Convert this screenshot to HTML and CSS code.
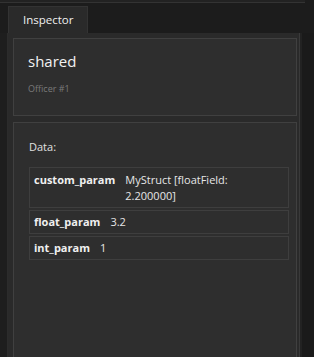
FILE: index.html
```html
<!DOCTYPE html>
<html>
<head>
<meta charset="utf-8">
<link rel="stylesheet" href="styles.css">
</head>
<body>
<div class="top-strip"></div>
<div class="tab-bar">
  <div class="tab">Inspector</div>
</div>
<div class="main">
  <div class="gutter-left"></div>
  <div class="panel">
    <div class="card header-card">
      <div class="title">shared</div>
      <div class="subtitle">Officer #1</div>
    </div>
    <div class="card data-card">
      <div class="data-label">Data:</div>
      <div class="rows">
        <div class="row"><span class="key">custom_param</span><span class="val">MyStruct [floatField: 2.200000]</span></div>
        <div class="row"><span class="key">float_param</span><span class="val">3.2</span></div>
        <div class="row"><span class="key">int_param</span><span class="val">1</span></div>
      </div>
    </div>
  </div>
  <div class="gutter-right"></div>
</div>
</body>
</html>
```
FILE: styles.css
```css
html, body {
  margin: 0;
  padding: 0;
  height: 100%;
  overflow: hidden;
}
body {
  background: #1c1c1c;
  font-family: "Open Sans", "Noto Sans", sans-serif;
  color: #e6e6e6;
  display: flex;
  flex-direction: column;
}
.top-strip {
  height: 2px;
  margin-right: 9px;
  border-bottom: 1px solid #333333;
  background: #222222;
}
.tab-bar {
  height: 30px;
  display: flex;
  align-items: flex-end;
  padding-left: 8px;
  background: #1c1c1c;
}
.tab {
  width: 80px;
  height: 27px;
  box-sizing: border-box;
  background: #2a2a2a;
  border: 1px solid #333333;
  border-bottom: none;
  font-size: 11.5px;
  line-height: 26px;
  padding-left: 14px;
  color: #f0f0f0;
}
.main {
  flex: 1;
  display: flex;
  min-height: 0;
}
.gutter-left {
  width: 8px;
  background: #1e1e1e;
  border-right: 1px solid #2c2c2c;
  box-sizing: border-box;
}
.panel {
  flex: 1;
  background: #2a2a2a;
  padding: 5px 2px 0 5px;
  display: flex;
  flex-direction: column;
  gap: 6px;
  border-right: 1px solid #3a3a3a;
}
.card {
  background: #2e2e2e;
  border: 1px solid #404040;
}
.header-card {
  height: 78px;
  box-sizing: border-box;
  padding: 11px 14px 10px;
}
.title {
  font-size: 15px;
  line-height: 22px;
  color: #f2f2f2;
}
.subtitle {
  font-size: 9px;
  margin-top: 10px;
  color: #7a7a7a;
}
.data-card {
  flex: 1;
  padding: 16px 7px 0 15px;
  border-bottom: none;
}
.data-label {
  font-size: 11px;
  line-height: 16px;
  color: #e0e0e0;
  margin-bottom: 12px;
}
.rows {
  display: flex;
  flex-direction: column;
  gap: 2px;
}
.row {
  display: flex;
  border: 1px solid #3e3e3e;
  padding: 3px 4px 3px 4px;
  font-size: 11px;
  line-height: 16px;
}
.row:first-child {
  padding-top: 4px;
  padding-bottom: 3px;
}
.key {
  font-weight: 700;
  color: #f0f0f0;
  margin-right: 10px;
  white-space: nowrap;
}
.val {
  color: #e6e6e6;
  width: 150px;
}
.gutter-right {
  width: 12px;
  background: #1a1a1a;
  border-left: 2px solid #222;
}
```
